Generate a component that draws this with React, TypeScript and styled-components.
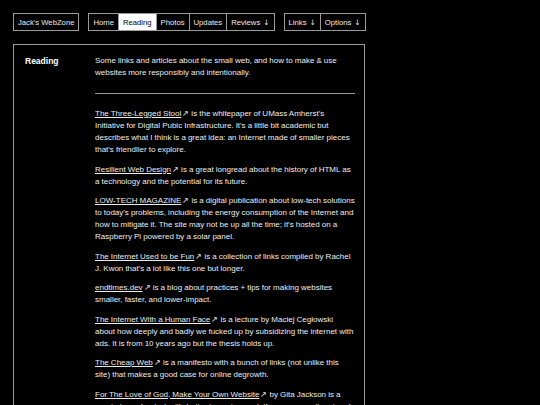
import styled, { createGlobalStyle } from "styled-components";

const GlobalStyle = createGlobalStyle`
  html, body {
    margin: 0;
    background: #000;
    color: #ececec;
    font-family: "Liberation Sans", Arial, sans-serif;
    font-size: 8px;
  }
`;

const Page = styled.div`
  padding: 13px 0 0 13px;
  width: 352px;
`;

const Header = styled.header`
  display: flex;
  gap: 9px;
  margin-bottom: 13px;
`;

const NavGroup = styled.nav`
  display: flex;
  border: 1px solid #9a9a9a;
  height: 16px;
`;

const NavItem = styled.a<{ $active?: boolean }>`
  display: flex;
  align-items: center;
  gap: 3px;
  padding: 0 4px;
  white-space: nowrap;
  color: ${(p) => (p.$active ? "#000" : "#ececec")};
  background: ${(p) => (p.$active ? "#fff" : "transparent")};
  text-decoration: none;
  font-size: 7.7px;
  & + & {
    border-left: 1px solid #9a9a9a;
  }
`;

const Caret = styled.span`
  font-family: "DejaVu Sans", sans-serif;
  font-size: 7.5px;
`;

const Main = styled.main`
  border: 1px solid #9a9a9a;
  border-bottom: none;
  padding: 10px 9px 20px 11px;
  display: grid;
  grid-template-columns: 70px 260px;
  min-height: 400px;
`;

const Label = styled.h2`
  margin: 0;
  font-size: 8.5px;
  font-weight: bold;
  line-height: 12px;
  color: #fff;
`;

const Content = styled.div`
  line-height: 12px;
  word-spacing: -0.15px;
`;

const Para = styled.p`
  margin: 0 0 7.5px;
`;

const Intro = styled.p`
  margin: 0;
`;

const Rule = styled.hr`
  border: none;
  border-top: 1px solid #9a9a9a;
  margin: 14px 0 14px;
`;

const Link = styled.a`
  color: #ececec;
  text-decoration: underline;
  text-underline-offset: 1px;
`;

const Arrow = styled.span`
  font-size: 7.5px;
  margin-left: 1px;
`;

const links = [
  {
    title: "The Three-Legged Stool",
    text: " is the whitepaper of UMass Amherst's Initiative for Digital Pubic Infrastructure. It's a little bit academic but describes what I think is a great idea: an Internet made of smaller pieces that's friendlier to explore.",
  },
  {
    title: "Resilient Web Design",
    text: " is a great longread about the history of HTML as a technology and the potential for its future.",
  },
  {
    title: "LOW-TECH MAGAZINE",
    text: " is a digital publication about low-tech solutions to today's problems, including the energy consumption of the Internet and how to mitigate it. The site may not be up all the time; it's hosted on a Raspberry Pi powered by a solar panel.",
  },
  {
    title: "The Internet Used to be Fun",
    text: " is a collection of links compiled by Rachel J. Kwon that's a lot like this one but longer.",
  },
  {
    title: "endtimes.dev",
    text: " is a blog about practices + tips for making websites smaller, faster, and lower-impact.",
  },
  {
    title: "The Internet With a Human Face",
    text: " is a lecture by Maciej Cegłowski about how deeply and badly we fucked up by subsidizing the internet with ads. It is from 10 years ago but the thesis holds up.",
  },
  {
    title: "The Cheap Web",
    text: " is a manifesto with a bunch of links (not unlike this site) that makes a good case for online degrowth.",
  },
  {
    title: "For The Love of God, Make Your Own Website",
    text: " by Gita Jackson is a great piece about why it's better to post on a platform you own than to rely on social media sites that can disappear overnight.",
  },
];

export default function App() {
  return (
    <>
      <GlobalStyle />
      <Page>
        <Header>
          <NavGroup>
            <NavItem href="#">Jack's WebZone</NavItem>
          </NavGroup>
          <NavGroup>
            <NavItem href="#">Home</NavItem>
            <NavItem href="#" $active>Reading</NavItem>
            <NavItem href="#">Photos</NavItem>
            <NavItem href="#">Updates</NavItem>
            <NavItem href="#">Reviews <Caret>↓</Caret></NavItem>
          </NavGroup>
          <NavGroup>
            <NavItem href="#">Links <Caret>↓</Caret></NavItem>
            <NavItem href="#">Options <Caret>↓</Caret></NavItem>
          </NavGroup>
        </Header>
        <Main>
          <Label>Reading</Label>
          <Content>
            <Intro>
              Some links and articles about the small web, and how to make &amp; use
              websites more responsibly and intentionally.
            </Intro>
            <Rule />
            {links.map((l) => (
              <Para key={l.title}>
                <Link href="#">{l.title}</Link>
                <Arrow>↗</Arrow>
                {l.text}
              </Para>
            ))}
          </Content>
        </Main>
      </Page>
    </>
  );
}
